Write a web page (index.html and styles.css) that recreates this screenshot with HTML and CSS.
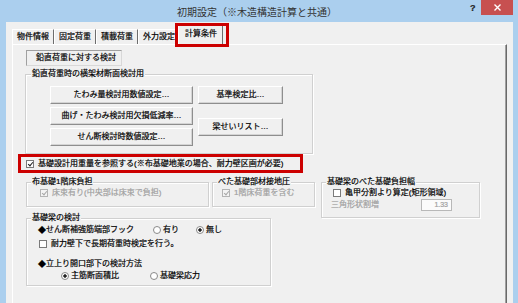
FILE: index.html
```html
<!doctype html>
<html lang="ja">
  <head>
    <meta charset="utf-8" />
    <title>初期設定</title>
    <link rel="stylesheet" href="styles.css">
  </head>
  <body>
    <div class="titlebar">
      <span class="title">初期設定（※木造構造計算と共通）</span>
      <span class="help">?</span>
      <span class="close">
        <svg width="7" height="7" viewBox="0 0 7 7"><path d="M0.5 0.5L6.5 6.5M6.5 0.5L0.5 6.5" stroke="#fff" stroke-width="1.4" /></svg>
      </span>
    </div>
    <div class="client">
      <div class="tabs">
        <span class="tab">物件情報</span>
        <span class="tab">固定荷重</span>
        <span class="tab">積載荷重</span>
        <span class="tab">外力設定</span>
        <span class="tab active">計算条件</span>
      </div>
      <div class="panel">
        <div class="subtab">鉛直荷重に対する検討</div>

        <div class="group g-beam">
          <div class="group-title">鉛直荷重時の横架材断面検討用</div>
          <div class="btn-grid">
            <button class="btn">たわみ量検討用数値設定…</button>
            <button class="btn btn-r1">基準検定比…</button>
            <button class="btn">曲げ・たわみ検討用欠損低減率…</button>
            <button class="btn btn-r2">梁せいリスト…</button>
            <button class="btn">せん断検討時数値設定…</button>
          </div>
        </div>

        <div class="row ref-row"><span class="chk on"></span>基礎設計用重量を参照する(※布基礎地業の場合、耐力壁区画が必要)</div>

        <div class="lower">
          <div class="lower-left">
            <div class="row-ab">
              <div class="group g-nuno">
                <div class="group-title">布基礎1階床負担</div>
                <div class="row opt off"><span class="chk on dis"></span>床束有り(中央部は床束で負担)</div>
              </div>
              <div class="group g-beta">
                <div class="group-title">べた基礎部材接地圧</div>
                <div class="row opt off"><span class="chk on dis"></span>1階床荷重を含む</div>
              </div>
            </div>

            <div class="group g-kiso">
              <div class="group-title">基礎梁の検討</div>
              <div class="row k1">
                <span class="dia">◆</span>せん断補強筋端部フック
                <span class="rad r-ari"></span>有り
                <span class="rad on r-nashi"></span>無し
              </div>
              <div class="row k2"><span class="chk"></span>耐力壁下で長期荷重時検定を行う。</div>
              <div class="row k3"><span class="dia">◆</span>立上り開口部下の検討方法</div>
              <div class="row k4">
                <span class="rad on r-main"></span>主筋断面積比
                <span class="rad r-oryoku"></span>基礎梁応力
              </div>
            </div>
          </div>

          <div class="group g-haba">
            <div class="group-title">基礎梁のべた基礎負担幅</div>
            <div class="row opt"><span class="chk"></span>亀甲分割より算定(矩形領域)</div>
            <div class="row tri off"><span class="tri-label">三角形状割増</span><span class="num">1.33</span></div>
          </div>
        </div>
      </div>
    </div>
  </body>
</html>
```

FILE: styles.css
```css
* {
  box-sizing: border-box;
}
body {
  margin: 0;
  width: 518px;
  height: 303px;
  overflow: hidden;
  background: #abcfee;
  font: 8px/12px "Liberation Sans", "Noto Sans CJK JP", sans-serif;
  color: #000;
  -webkit-text-stroke: 0.2px currentColor;
}

/* title bar */
.titlebar {
  height: 22px;
  display: flex;
  align-items: flex-start;
}
.title {
  flex: 1;
  text-align: center;
  font-size: 10px;
  line-height: 14px;
  padding: 5px 0 0 48px;
  color: #333;
  font-family: "Noto Sans CJK JP", sans-serif;
  -webkit-text-stroke: 0;
}
.help {
  flex: none;
  width: 15px;
  padding: 3px 0 0 4px;
  font-size: 9px;
  font-weight: bold;
  line-height: 10px;
  color: #222;
}
.close {
  flex: none;
  width: 32px;
  height: 15px;
  margin-right: 5px;
  background: #c75050;
  display: flex;
  align-items: center;
  justify-content: center;
}

/* client + tabs */
.client {
  margin: 0 5px 0 6px;
  height: 281px;
  background: #f0f0f0;
  display: flex;
  flex-direction: column;
}
.tabs {
  display: flex;
  align-items: flex-end;
  height: 22px;
  padding-left: 6px;
  position: relative;
  z-index: 1;
}
.tab {
  height: 15px;
  padding: 0 4px;
  line-height: 13px;
  border: 1px solid #fff;
  border-right-color: #6d6d6d;
  border-bottom: none;
  white-space: nowrap;
}
.tab.active {
  position: relative;
  height: 20px;
  margin: 0 0 -1px -2px;
  padding: 1px 5px 0 6px;
  background: #f0f0f0;
}
.tab.active::after {
  content: "";
  position: absolute;
  top: -3px;
  left: -4px;
  right: -7px;
  bottom: -2px;
  border: 3px solid #cc0000;
}
.panel {
  flex: 1;
  margin: 0 6px;
  border-top: 1px solid #fff;
  border-left: 1px solid #fff;
  border-right: 1px solid #696969;
  box-shadow: inset -1px 0 #a0a0a0;
  padding: 5px 0 0 13px;
}

.subtab {
  width: 96px;
  height: 16px;
  border: 1px solid;
  border-color: #a0a0a0 #d8d8d8 #d8d8d8 #a0a0a0;
  text-align: center;
  line-height: 14px;
  padding-left: 4px;
}

/* group boxes */
.group {
  border: 1px solid #d0d0d0;
  box-shadow: inset 1px 1px #fff, 1px 1px #fff;
}
.group-title {
  width: fit-content;
  margin: -6px 0 0 4px;
  padding: 0 1px;
  line-height: 10px;
  background: #f0f0f0;
  white-space: nowrap;
}
.g-beam {
  width: 288px;
  margin: 8px 0 0 -1px;
  padding-bottom: 7px;
}
.g-beam .group-title {
  margin-left: 5px;
}
.btn-grid {
  display: grid;
  grid-template-columns: 143px 85px;
  grid-auto-rows: 18px;
  column-gap: 5px;
  row-gap: 3px;
  margin: 7px 0 0 24px;
}
.btn {
  font: inherit;
  color: #000;
  padding: 0;
  border: 1px solid;
  border-color: #fff #8e8e8e #8e8e8e #fff;
  box-shadow: inset -1px -1px #d4d4d4;
  background: #f0f0f0;
  white-space: nowrap;
}
.btn-r1 {
  grid-column: 2;
  grid-row: 1;
}
.btn-r2 {
  grid-column: 2;
  grid-row: 2 / 4;
  align-self: center;
  height: 18px;
}

/* rows, checkboxes, radios */
.row {
  display: flex;
  align-items: center;
  height: 12px;
  white-space: nowrap;
}
.off {
  color: #a0a0a0;
}
.chk {
  position: relative;
  width: 8px;
  height: 8px;
  margin-right: 4px;
  border: 1px solid #7a7a7a;
  background: #fff;
  flex: none;
}
.chk.on::after {
  content: "";
  position: absolute;
  left: 2px;
  top: 0;
  width: 2px;
  height: 4px;
  border-right: 1.5px solid #222;
  border-bottom: 1.5px solid #222;
  transform: rotate(40deg);
}
.chk.dis {
  border-color: #b4b4b4;
  background: #f4f4f4;
}
.chk.dis::after {
  border-color: #a8a8a8;
}
.rad {
  width: 8px;
  height: 8px;
  margin-right: 2px;
  border-radius: 50%;
  border: 1px solid #8a8a8a;
  background: #fff;
  flex: none;
}
.rad.on {
  background: radial-gradient(circle, #222 0 1.4px, #fff 2px);
}
.dia {
  font-family: "Noto Sans CJK JP", sans-serif;
}

.ref-row {
  width: 285px;
  height: 19px;
  margin-left: -8px;
  padding-left: 5px;
  border: 3px solid #cc0000;
}

/* lower half */
.lower {
  display: flex;
  align-items: flex-start;
  margin-top: 9px;
}
.row-ab {
  display: flex;
  align-items: flex-start;
}
.g-nuno {
  width: 183px;
  padding-bottom: 7px;
}
.g-nuno .opt {
  margin-left: 13px;
}
.g-beta {
  width: 103px;
  margin-left: 3px;
  padding-bottom: 7px;
}
.g-beta .opt {
  margin-left: 9px;
}
.g-haba {
  width: 159px;
  margin-left: 6px;
  padding-bottom: 6px;
}
.g-haba .opt {
  margin-left: 11px;
}
.tri {
  margin-left: 9px;
}
.tri-label {
  width: 90px;
}
.num {
  width: 31px;
  height: 12px;
  border: 1px solid #b8b8b8;
  background: #fbfbfb;
  text-align: right;
  padding-right: 3px;
  line-height: 10px;
  font-size: 7px;
}

.g-kiso {
  width: 245px;
  margin-top: 11px;
  padding-bottom: 3px;
}
.k1 {
  margin: 1px 0 0 11px;
}
.k1 .r-ari {
  margin-left: 19px;
}
.k1 .r-nashi {
  margin-left: 17px;
}
.k2 {
  margin: 2px 0 0 12px;
}
.k3 {
  margin: 8px 0 0 11px;
}
.k4 {
  margin-left: 34px;
}
.k4 .r-oryoku {
  margin-left: 31px;
}
```
